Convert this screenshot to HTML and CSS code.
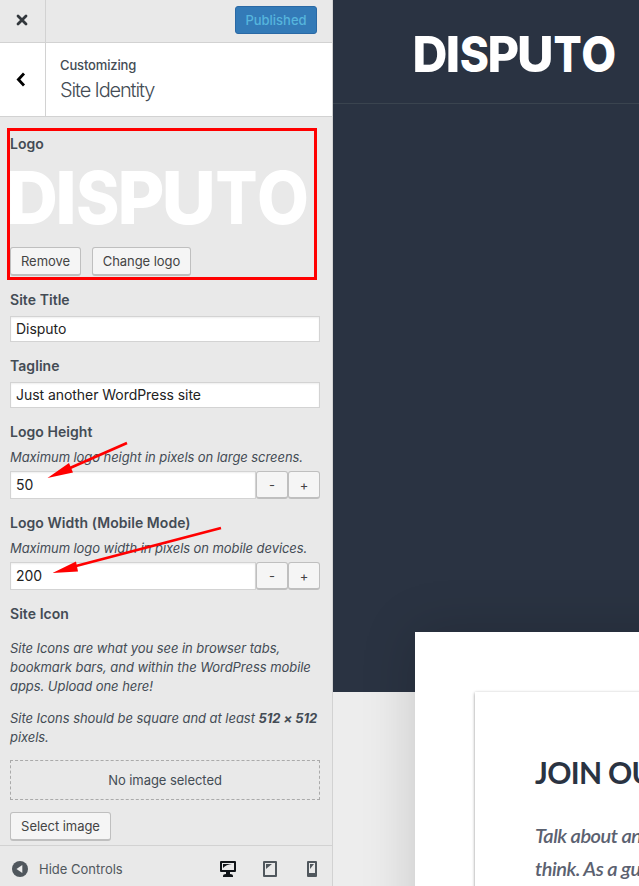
FILE: index.html
```html
<!DOCTYPE html>
<html lang="en">
<head>
<meta charset="utf-8">
<title>Customize: Site Identity</title>
<link rel="stylesheet" href="styles.css">
</head>
<body>
<div class="app">
  <aside class="sidebar">
    <header class="topbar">
      <div class="close"><svg width="12" height="12" viewBox="0 0 12 12"><path d="M2 2l8 8M10 2l-8 8" stroke="#32373c" stroke-width="2.8" stroke-linecap="round"/></svg></div>
      <button class="published"><span>Published</span></button>
    </header>
    <div class="section-head">
      <div class="back"><svg width="10" height="15" viewBox="0 0 10 15"><path d="M8 1.500L2.400 7.500L8 13.500" fill="none" stroke="#000" stroke-width="2.8"/></svg></div>
      <div class="heading"><div class="crumb">Customizing</div><h1>Site Identity</h1></div>
    </div>
    <main class="controls">
      <section class="control">
        <div class="label">Logo</div>
        <svg class="logo-preview" width="310" height="91"><text class="logo-text" y="68"><tspan x="-4" textLength="52" lengthAdjust="spacingAndGlyphs">D</tspan><tspan x="45" textLength="22" lengthAdjust="spacingAndGlyphs">I</tspan><tspan x="66" textLength="43.5" lengthAdjust="spacingAndGlyphs">S</tspan><tspan x="107.5" textLength="47" lengthAdjust="spacingAndGlyphs">P</tspan><tspan x="151.5" textLength="54.5" lengthAdjust="spacingAndGlyphs">U</tspan><tspan x="205.5" textLength="42" lengthAdjust="spacingAndGlyphs">T</tspan><tspan x="247" textLength="52" lengthAdjust="spacingAndGlyphs">O</tspan></text></svg>
        <div class="buttons"><button class="btn remove">Remove</button><button class="btn change">Change logo</button></div>
      </section>
      <section class="control">
        <div class="label">Site Title</div>
        <div class="field">Disputo</div>
      </section>
      <section class="control">
        <div class="label">Tagline</div>
        <div class="field">Just another WordPress site</div>
      </section>
      <section class="control">
        <div class="label">Logo Height</div>
        <p class="desc">Maximum logo height in pixels on large screens.</p>
        <div class="stepper"><div class="field">50</div><button class="btn">-</button><button class="btn">+</button></div>
      </section>
      <section class="control">
        <div class="label">Logo Width (Mobile Mode)</div>
        <p class="desc">Maximum logo width in pixels on mobile devices.</p>
        <div class="stepper"><div class="field">200</div><button class="btn">-</button><button class="btn">+</button></div>
      </section>
      <section class="control">
        <div class="label">Site Icon</div>
        <p class="help">Site Icons are what you see in browser tabs,<br>bookmark bars, and within the WordPress mobile<br>apps. Upload one here!</p>
        <p class="help">Site Icons should be square and at least <b>512 × 512</b><br>pixels.</p>
        <div class="placeholder">No image selected</div>
        <button class="btn select">Select image</button>
      </section>
    </main>
    <footer class="footer">
      <svg width="16" height="16" viewBox="0 0 16 16"><circle cx="8" cy="8" r="8" fill="#50575d"/><path d="M10.3 4v8L4.5 8z" fill="#eee"/></svg>
      <span class="hide">Hide Controls</span>
      <svg class="desktop" width="16" height="16" viewBox="0 0 16 16"><path fill="#101418" fill-rule="evenodd" d="M1 0h14q1 0 1 1v9q0 1-1 1h-5v2q3 0 3 2v1H3v-1q0-2 3-2v-2H1q-1 0-1-1V1q0-1 1-1zM2 2v7h12V2z"/><path fill="#101418" d="M3 3h9Q6 3.500 3 7z"/></svg>
      <svg class="tablet" width="14" height="16" viewBox="0 0 14 16"><path fill="#50575d" fill-rule="evenodd" d="M1 0h12q1 0 1 1v14q0 1-1 1H1q-1 0-1-1V1q0-1 1-1zM2 2v12h10V2z"/><path fill="#50575d" d="M3 3h6L3 8z"/></svg>
      <svg class="phone" width="10" height="16" viewBox="0 0 10 16"><path fill="#50575d" fill-rule="evenodd" d="M1 0h8q1 0 1 1v14q0 1-1 1H1q-1 0-1-1V1q0-1 1-1zM2 2v10h6V2z"/><path fill="#50575d" d="M3 3h4L3 8z"/></svg>
    </footer>
  </aside>
  <div class="preview">
    <div class="hero">
      <div class="site-header"><svg width="306" height="103"><text class="logo-text" transform="translate(82.3 71.5) scale(.672)"><tspan x="-4" textLength="52" lengthAdjust="spacingAndGlyphs">D</tspan><tspan x="45" textLength="22" lengthAdjust="spacingAndGlyphs">I</tspan><tspan x="66" textLength="43.5" lengthAdjust="spacingAndGlyphs">S</tspan><tspan x="107.5" textLength="47" lengthAdjust="spacingAndGlyphs">P</tspan><tspan x="151.5" textLength="54.5" lengthAdjust="spacingAndGlyphs">U</tspan><tspan x="205.5" textLength="42" lengthAdjust="spacingAndGlyphs">T</tspan><tspan x="247" textLength="52" lengthAdjust="spacingAndGlyphs">O</tspan></text></svg></div>
    </div>
    <div class="page">
      <div class="card">
        <h2>JOIN OUR</h2>
        <p>Talk about anything<br>think. As a guest</p>
      </div>
    </div>
  </div>
  <svg class="annotations" width="333" height="886" viewBox="0 0 333 886">
    <rect x="8.500" y="129.500" width="307" height="149" fill="none" stroke="#f00" stroke-width="3"/>
    <path d="M127 443L70 468M221 528L76 566" stroke="#f00" stroke-width="2.800"/>
    <path fill="#f00" d="M47.500 478L69 463L73 472.500zM52.500 573L76 561.500L78 571.500z"/>
  </svg>
</div>
</body>
</html>
```
FILE: styles.css
```css
* { box-sizing: border-box; }
body { margin: 0; font-family: Inter, "Liberation Sans", sans-serif; font-size: 13px; color: #444c55; }
h1, h2, p { margin: 0; }
button { font: inherit; padding: 0; }
svg { display: block; flex: none; }
.app { position: relative; display: flex; width: 639px; height: 886px; overflow: hidden; background: #ededed; }
.sidebar { width: 333px; flex: none; display: flex; flex-direction: column; background: #e9e9e9; border-right: 1px solid #d2d2d2; }
.topbar { flex: none; height: 43px; display: flex; align-items: center; justify-content: space-between; border-bottom: 1px solid #d2d2d2; padding-right: 15px; }
.close, .back { width: 46px; align-self: stretch; display: flex; align-items: center; justify-content: center; border-right: 1px solid #d2d2d2; padding-right: 1px; }
.close { padding-bottom: 3px; }
.back { padding: 0 3px 0 0; }
.published { width: 82px; height: 28px; margin-bottom: 2px; border: 1px solid #2a69a5; border-radius: 3px; background: #337ab7; color: #56b5dd; font-weight: 500; letter-spacing: 0; }
.section-head { flex: none; height: 74px; display: flex; background: #fff; border-bottom: 1px solid #d2d2d2; }
.heading { padding: 12px 0 0 14px; }
.crumb { line-height: 20px; letter-spacing: -0.15px; font-weight: 500; }
h1 { font-size: 20px; font-weight: 300; line-height: 31px; letter-spacing: -1.15px; color: #444c55; }
.controls { flex: 1; min-height: 0; padding: 15px 12px 0 10px; }
.control { margin-bottom: 12px; }
.control:last-child { margin-bottom: 0; }
.label { font-size: 14px; line-height: 24px; font-weight: 600; color: #444c55; letter-spacing: 0.05px; }
.logo-preview { overflow: visible; }
.logo-text { font-family: Inter, sans-serif; font-weight: 800; font-size: 73px; fill: #fff; }
.buttons { display: flex; gap: 11px; }
.btn { height: 29px; border: 1px solid #bfbfbf; border-bottom-width: 2px; border-radius: 3px; background: #f5f5f5; color: #444; letter-spacing: -0.05px; }
.remove { width: 71px; }
.change { width: 99px; }
.select { width: 101px; }
.field { height: 26px; margin-top: 4px; padding: 0 5px; border: 1px solid #d3d3d3; background: #fff; box-shadow: inset 0 1px 2px rgba(0,0,0,.07); font-size: 14px; line-height: 24px; color: #222; letter-spacing: -0.05px; }
.desc { margin-top: 4px; line-height: 19px; font-style: italic; white-space: nowrap; letter-spacing: -0.07px; }
.stepper { display: flex; margin-top: 4px; }
.stepper .field { flex: 1; margin: 0; height: 28px; line-height: 26px; }
.stepper .btn { width: 32px; height: 28px; }
.help { margin-top: 13px; line-height: 19px; font-style: italic; white-space: nowrap; letter-spacing: -0.05px; }
.placeholder { height: 40px; margin: 13px 0 12px; border: 1px dashed #aaa; text-align: center; line-height: 38px; letter-spacing: -0.05px; }
.footer { flex: none; height: 41px; display: flex; align-items: center; padding: 6px 15px 0 12px; border-top: 1px solid #d2d2d2; }
.hide { margin-left: 11px; color: #50575d; }
.desktop { margin-left: auto; margin-right: 27px; }
.tablet { margin-right: 30px; }
.preview { flex: 1; overflow: hidden; }
.hero { height: 692px; background: #2a3342; }
.site-header { height: 104px; border-bottom: 1px solid #3a444f; }
.page { width: 500px; height: 400px; margin: -60px 0 0 82px; padding: 60px 0 0 60px; position: relative; background: #fff; box-shadow: 0 0 50px rgba(0,0,0,.17); }
.card { height: 400px; padding: 59px 60px; box-shadow: 0 1px 3px rgba(0,0,0,.45); font-family: Lato, sans-serif; white-space: nowrap; }
h2 { font-size: 30px; line-height: 42px; font-weight: 700; color: #2a3342; letter-spacing: -0.7px; }
.card p { margin-top: 26px; font-size: 20px; line-height: 33px; font-style: italic; font-weight: 600; color: #5b6170; letter-spacing: -0.5px; }
.annotations { position: absolute; left: 0; top: 0; pointer-events: none; }
```
